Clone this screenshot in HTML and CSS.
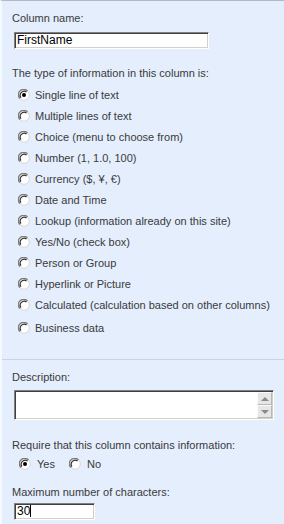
FILE: index.html
```html
<!DOCTYPE html>
<html lang="en">
<head>
    <meta charset="UTF-8">
    <title>Column settings</title>
    <link rel="stylesheet" href="styles.css">
</head>
<body>
    <svg width="0" height="0" class="defs">
        <symbol id="radio" viewBox="0 0 12 12">
            <circle cx="6" cy="6" r="5.3" fill="#fff" stroke="#d8d6d0" stroke-width="1"/>
            <path d="M1.9 9.6 A5.3 5.3 0 0 1 9.6 1.9" fill="none" stroke="#7a7a7a" stroke-width="1.2"/>
            <path d="M2.9 8.6 A4.1 4.1 0 0 1 8.6 2.9" fill="none" stroke="#2e2e2e" stroke-width="1.2"/>
        </symbol>
        <symbol id="radio-on" viewBox="0 0 12 12">
            <use href="#radio"/>
            <circle cx="6" cy="6" r="2" fill="#000"/>
        </symbol>
    </svg>

    <div class="panel">
        <!-- Name and type -->
        <div class="section">
            <div class="label first">Column name:</div>
            <div class="textbox wide">FirstName</div>

            <div class="label">The type of information in this column is:</div>
            <ul class="choices">
                <li><svg class="radio"><use href="#radio-on"/></svg>Single line of text</li>
                <li><svg class="radio"><use href="#radio"/></svg>Multiple lines of text</li>
                <li><svg class="radio"><use href="#radio"/></svg>Choice (menu to choose from)</li>
                <li><svg class="radio"><use href="#radio"/></svg>Number (1, 1.0, 100)</li>
                <li><svg class="radio"><use href="#radio"/></svg>Currency ($, ¥, €)</li>
                <li><svg class="radio"><use href="#radio"/></svg>Date and Time</li>
                <li><svg class="radio"><use href="#radio"/></svg>Lookup (information already on this site)</li>
                <li><svg class="radio"><use href="#radio"/></svg>Yes/No (check box)</li>
                <li><svg class="radio"><use href="#radio"/></svg>Person or Group</li>
                <li><svg class="radio"><use href="#radio"/></svg>Hyperlink or Picture</li>
                <li><svg class="radio"><use href="#radio"/></svg>Calculated (calculation based on other columns)</li>
                <li class="last"><svg class="radio"><use href="#radio"/></svg>Business data</li>
            </ul>
        </div>

        <!-- Additional settings -->
        <div class="section settings">
            <div class="label first">Description:</div>
            <div class="textarea">
                <div class="textarea-body"></div>
                <div class="scroll">
                    <div class="scroll-btn"><span class="arrow up"></span></div>
                    <div class="scroll-btn"><span class="arrow down"></span></div>
                </div>
            </div>

            <div class="label require">Require that this column contains information:</div>
            <div class="yesno">
                <span class="opt"><svg class="radio"><use href="#radio-on"/></svg>Yes</span>
                <span class="opt"><svg class="radio"><use href="#radio"/></svg>No</span>
            </div>

            <div class="label max">Maximum number of characters:</div>
            <div class="textbox narrow">30<span class="caret"></span></div>
        </div>
    </div>
</body>
</html>
```

FILE: styles.css
```css
body {
    margin: 0;
    font-family: "Liberation Sans", Arial, sans-serif;
    font-size: 11px;
    color: #3a3a3a;
    background: #e4eefd;
}
.defs {
    position: absolute;
}
.panel {
    width: 284px;
    height: 524px;
    box-sizing: border-box;
    border-top: 1px solid #b4b8c0;
    border-left: 2px solid #f4f8ff;
    background: #e4eefd;
    overflow: hidden;
}
.section {
    padding-left: 10px;
}
.label {
    line-height: 14px;
    height: 14px;
    margin-top: 17px;
}
.label.first {
    margin-top: 10px;
}
.textbox {
    box-sizing: border-box;
    height: 17px;
    margin: 7px 0 0 2px;
    padding-left: 2px;
    background: #fff;
    border-top: 1px solid #808080;
    border-left: 1px solid #808080;
    border-bottom: 1px solid #fff;
    border-right: 1px solid #fff;
    box-shadow: inset 1px 1px 0 #404040, inset -1px -1px 0 #d4d0c8;
    font-size: 12px;
    line-height: 15px;
    color: #000;
}
.wide {
    width: 195px;
}
.narrow {
    width: 81px;
}
.caret {
    display: inline-block;
    width: 1px;
    height: 12px;
    background: #000;
    vertical-align: -2px;
}
.choices {
    list-style: none;
    margin: 4px 0 0;
    padding: 0 0 0 6px;
}
.choices li {
    display: flex;
    align-items: center;
    height: 21px;
}
.choices li.last {
    margin-top: 2px;
}
.radio {
    width: 12px;
    height: 12px;
    margin-right: 5px;
    flex: none;
}
.settings {
    margin-top: 21px;
    border-top: 1px solid #c9d3e2;
}
.textarea {
    display: flex;
    box-sizing: border-box;
    width: 260px;
    height: 30px;
    margin: 6px 0 0 2px;
    background: #fff;
    border-top: 1px solid #808080;
    border-left: 1px solid #808080;
    border-bottom: 1px solid #fff;
    border-right: 1px solid #fff;
    box-shadow: inset 1px 1px 0 #404040, inset -1px -1px 0 #d4d0c8;
}
.textarea-body {
    flex: 1;
}
.scroll {
    display: flex;
    flex-direction: column;
    width: 15px;
    padding: 1px 1px 1px 0;
}
.scroll-btn {
    flex: 1;
    display: flex;
    align-items: center;
    justify-content: center;
    background: #e6e6e6;
    border: 1px solid #b8b8b8;
    border-top-color: #fafafa;
    border-left-color: #fafafa;
}
.arrow {
    width: 0;
    height: 0;
    border-left: 4px solid transparent;
    border-right: 4px solid transparent;
}
.arrow.up {
    border-bottom: 4px solid #8a8a8a;
}
.arrow.down {
    border-top: 4px solid #8a8a8a;
}
.label.require {
    margin-top: 18px;
}
.yesno {
    display: flex;
    align-items: center;
    gap: 14px;
    height: 14px;
    margin-top: 5px;
    padding-left: 7px;
}
.opt {
    display: flex;
    align-items: center;
}
.opt .radio {
    margin-right: 6px;
}
.label.max {
    margin-top: 14px;
}
.textbox.narrow {
    margin-top: 4px;
}
```
